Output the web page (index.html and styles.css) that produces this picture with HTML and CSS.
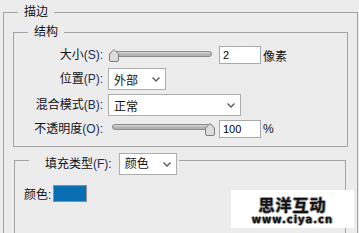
FILE: index.html
```html
<!DOCTYPE html>
<html lang="zh-CN">
<head>
    <meta charset="UTF-8">
    <title>描边</title>
    <link rel="stylesheet" href="styles.css">
</head>
<body>
    <fieldset class="group">
        <legend>描边</legend>

        <fieldset class="group inner">
            <legend>结构</legend>
            <div class="rows">
                <label class="lbl">大小<span class="key">(S):</span></label>
                <div class="ctrl">
                    <svg class="slider" width="108" height="18" viewBox="0 0 108 18">
                        <rect x="2.5" y="5.5" width="101" height="5" rx="2.5" fill="#b4b4b4" stroke="#8c8c8c"/>
                        <rect x="4" y="6" width="98" height="1.5" fill="#d2d2d2"/>
                        <path d="M1.5 8 L6 3.5 L10.5 8 L10.5 14 Q10.5 15.5 9 15.5 L3 15.5 Q1.5 15.5 1.5 14 Z" fill="#dcdcdc" stroke="#7d7d7d"/>
                    </svg>
                    <input class="num" type="text" value="2">
                    <span class="unit">像素</span>
                </div>

                <label class="lbl">位置<span class="key">(P):</span></label>
                <div class="ctrl">
                    <div class="dropdown small">
                        <span>外部</span>
                        <svg width="8" height="5" viewBox="0 0 8 5"><polyline points="0.5,0.5 4,4 7.5,0.5" fill="none" stroke="#5a5a5a" stroke-width="1.4"/></svg>
                    </div>
                </div>

                <label class="lbl">混合模式<span class="key">(B):</span></label>
                <div class="ctrl">
                    <div class="dropdown wide">
                        <span>正常</span>
                        <svg width="8" height="5" viewBox="0 0 8 5"><polyline points="0.5,0.5 4,4 7.5,0.5" fill="none" stroke="#5a5a5a" stroke-width="1.4"/></svg>
                    </div>
                </div>

                <label class="lbl">不透明度<span class="key">(O):</span></label>
                <div class="ctrl">
                    <svg class="slider" width="108" height="18" viewBox="0 0 108 18">
                        <rect x="4.5" y="4.5" width="100" height="5" rx="2.5" fill="#b4b4b4" stroke="#8c8c8c"/>
                        <rect x="6" y="5" width="97" height="1.5" fill="#d2d2d2"/>
                        <path d="M97.5 8 L102 3.5 L106.5 8 L106.5 14 Q106.5 15.5 105 15.5 L99 15.5 Q97.5 15.5 97.5 14 Z" fill="#dcdcdc" stroke="#7d7d7d"/>
                    </svg>
                    <input class="num" type="text" value="100">
                    <span class="unit">%</span>
                </div>
            </div>
        </fieldset>

        <fieldset class="group fill">
            <legend class="fill-head">
                <span class="fill-label">填充类型<span class="key">(F):</span></span>
                <div class="dropdown small">
                    <span>颜色</span>
                    <svg width="8" height="5" viewBox="0 0 8 5"><polyline points="0.5,0.5 4,4 7.5,0.5" fill="none" stroke="#5a5a5a" stroke-width="1.4"/></svg>
                </div>
            </legend>
            <div class="color-row">
                <span>颜色:</span>
                <div class="swatch"></div>
            </div>
        </fieldset>
    </fieldset>

    <div class="watermark">
        <div class="wm-title">思洋互动</div>
        <div class="wm-url">www.ciya.cn</div>
    </div>
</body>
</html>
```

FILE: styles.css
```css
body {
    margin: 0;
    width: 359px;
    height: 233px;
    overflow: hidden;
    position: relative;
    background-color: #ececec;
    font-family: "Liberation Sans", "Noto Sans CJK SC", sans-serif;
    font-size: 12px;
    color: #111;
}

.group {
    margin: 4px 1px 0 3px;
    padding: 4px 9px 0 9px;
    border: 1px solid #a3a3a3;
    min-width: 0;
}

.group legend {
    margin-left: 5px;
    padding: 0 6px;
    line-height: 16px;
}

.inner {
    margin: 0;
    padding: 6px 9px 8px 9px;
}

.key {
    color: #1d2b55;
}

.rows {
    display: grid;
    grid-template-columns: 80px auto;
    grid-template-rows: 18px 22px 22px 18px;
    column-gap: 5px;
    row-gap: 4px;
}

.lbl {
    text-align: right;
    align-self: center;
    line-height: 16px;
}

.ctrl {
    display: flex;
    align-items: center;
}

.slider {
    display: block;
    margin-right: 3px;
}

.num {
    width: 42px;
    height: 18px;
    box-sizing: border-box;
    margin: 0;
    padding: 0 0 0 3px;
    border: 1px solid #a9a9a9;
    background: #fff;
    font-family: "Liberation Sans", sans-serif;
    font-size: 11px;
    color: #000;
}

.unit {
    margin-left: 2px;
}

.dropdown {
    height: 22px;
    box-sizing: border-box;
    border: 1px solid #adadad;
    background: #fff;
    display: flex;
    align-items: center;
    justify-content: space-between;
    padding: 0 5px 0 5px;
}

.dropdown.small {
    width: 58px;
}

.dropdown.wide {
    width: 133px;
}

.fill {
    margin: 6px 2px 0 1px;
    padding: 18px 9px 0 9px;
    height: 200px;
}

.group legend.fill-head {
    height: 14px;
    padding: 0 2px 0 16px;
    display: flex;
    align-items: flex-start;
    gap: 7px;
}

.fill-label {
    line-height: 22px;
}

.color-row {
    display: flex;
    align-items: center;
    gap: 2px;
}

.swatch {
    width: 34px;
    height: 17px;
    box-sizing: border-box;
    border: 1px solid #8f8f8f;
    background-color: #0a6eb2;
}

.watermark {
    position: absolute;
    left: 231px;
    top: 190px;
    width: 123px;
    height: 38px;
    background: #fff;
    text-align: center;
    font-weight: bold;
    color: #111;
    text-shadow: 1px 0 #999, -1px 0 #999, 0 1px #999, 0 -1px #999;
}

.wm-title {
    margin-top: 5px;
    font-family: "Noto Sans CJK SC", sans-serif;
    font-size: 16px;
    line-height: 18px;
    letter-spacing: 1px;
}

.wm-url {
    margin-top: 1px;
    font-family: "DejaVu Sans", sans-serif;
    font-size: 10px;
    line-height: 11px;
    letter-spacing: 1px;
}
```
